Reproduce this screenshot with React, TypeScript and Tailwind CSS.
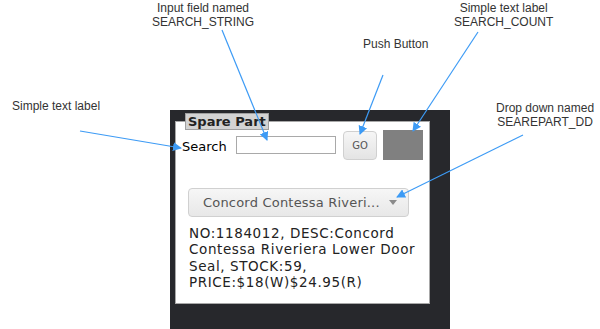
const Arrow = ({ x1, y1, x2, y2 }: { x1: number; y1: number; x2: number; y2: number }) => (
  <line x1={x1} y1={y1} x2={x2} y2={y2} stroke="#3d9bf5" strokeWidth="1.2" markerEnd="url(#head)" />
);

const App = () => {
  return (
    <div className="relative w-[600px] h-[329px] overflow-hidden bg-white font-['Liberation_Sans',Arial,sans-serif]">
      {/* annotation labels */}
      <div className="absolute left-[152px] top-[1px] text-center text-[12px] leading-[14px] text-[#333]">
        Input field named
        <br />
        SEARCH_STRING
      </div>
      <div className="absolute left-[12px] top-[99px] text-[12px] leading-[14px] text-[#333]">Simple text label</div>
      <div className="absolute left-[363px] top-[37px] text-[12px] leading-[14px] text-[#333]">Push Button</div>
      <div className="absolute left-[454px] top-[1px] text-center text-[12px] leading-[14px] text-[#333]">
        Simple text label
        <br />
        SEARCH_COUNT
      </div>
      <div className="absolute left-[496px] top-[101px] text-center text-[12px] leading-[14px] text-[#333]">
        Drop down named
        <br />
        SEAREPART_DD
      </div>

      {/* form panel */}
      <div className="ml-[170px] mt-[110px] w-[280px] h-[219px] bg-[#27282c] pl-[5px] pr-[20px] pt-[11px] font-['DejaVu_Sans',Verdana,sans-serif]">
        <div className="relative h-[183px] border border-[#a8a8a8] bg-white">
          <div className="absolute left-[9px] -top-[9px] border border-[#a0a0a0] bg-[#d3d3d3] px-[2px] text-[13px] font-bold leading-[15px] text-[#222]">
            Spare Part
          </div>

          <div className="flex items-center pl-[6px] pt-[8px]">
            <span className="mt-[4px] w-[54px] text-[13px] text-black">Search</span>
            <input className="h-[18px] w-[100px] border border-[#a9a9a9] bg-white outline-none" />
            <button className="ml-[7px] flex h-[29px] w-[34px] items-center justify-center rounded-[4px] border border-[#d0d0d0] bg-gradient-to-b from-[#f6f6f6] to-[#e4e4e4] text-[10px] text-[#555]">
              GO
            </button>
            <div className="ml-[6px] h-[30px] w-[40px] bg-[#808080]" />
          </div>

          <div className="ml-[12px] mt-[28px] flex h-[29px] w-[221px] items-center justify-between rounded-[4px] border border-[#d0d0d0] bg-gradient-to-b from-[#f6f6f6] to-[#e8e8e8] pl-[14px] pr-[11px] text-[13px] tracking-[0.2px] text-[#555]">
            <span>Concord Contessa Riveri...</span>
            <svg width="8" height="5" viewBox="0 0 8 5">
              <polygon points="0,0 8,0 4,5" fill="#8a8a8a" />
            </svg>
          </div>

          <div className="ml-[13px] mt-[8px] text-[13.5px] leading-[16.3px] tracking-[0.6px] text-[#222]">
            NO:1184012, DESC:Concord
            <br />
            Contessa Riveriera Lower Door
            <br />
            Seal, STOCK:59,
            <br />
            PRICE:$18(W)$24.95(R)
          </div>
        </div>
      </div>

      {/* arrows */}
      <svg className="pointer-events-none absolute left-0 top-0" width="600" height="329">
        <defs>
          <marker id="head" markerWidth="9" markerHeight="9" refX="8" refY="4.5" orient="auto" markerUnits="userSpaceOnUse">
            <polygon points="0,0 9,4.5 0,9" fill="#3d9bf5" />
          </marker>
        </defs>
        <Arrow x1={80} y1={131} x2={181} y2={148} />
        <Arrow x1={222} y1={30} x2={267} y2={140} />
        <Arrow x1={383} y1={75} x2={360} y2={134} />
        <Arrow x1={478} y1={32} x2={413} y2={131} />
        <Arrow x1={523} y1={135} x2={397} y2={197} />
      </svg>
    </div>
  );
};

export default App;
